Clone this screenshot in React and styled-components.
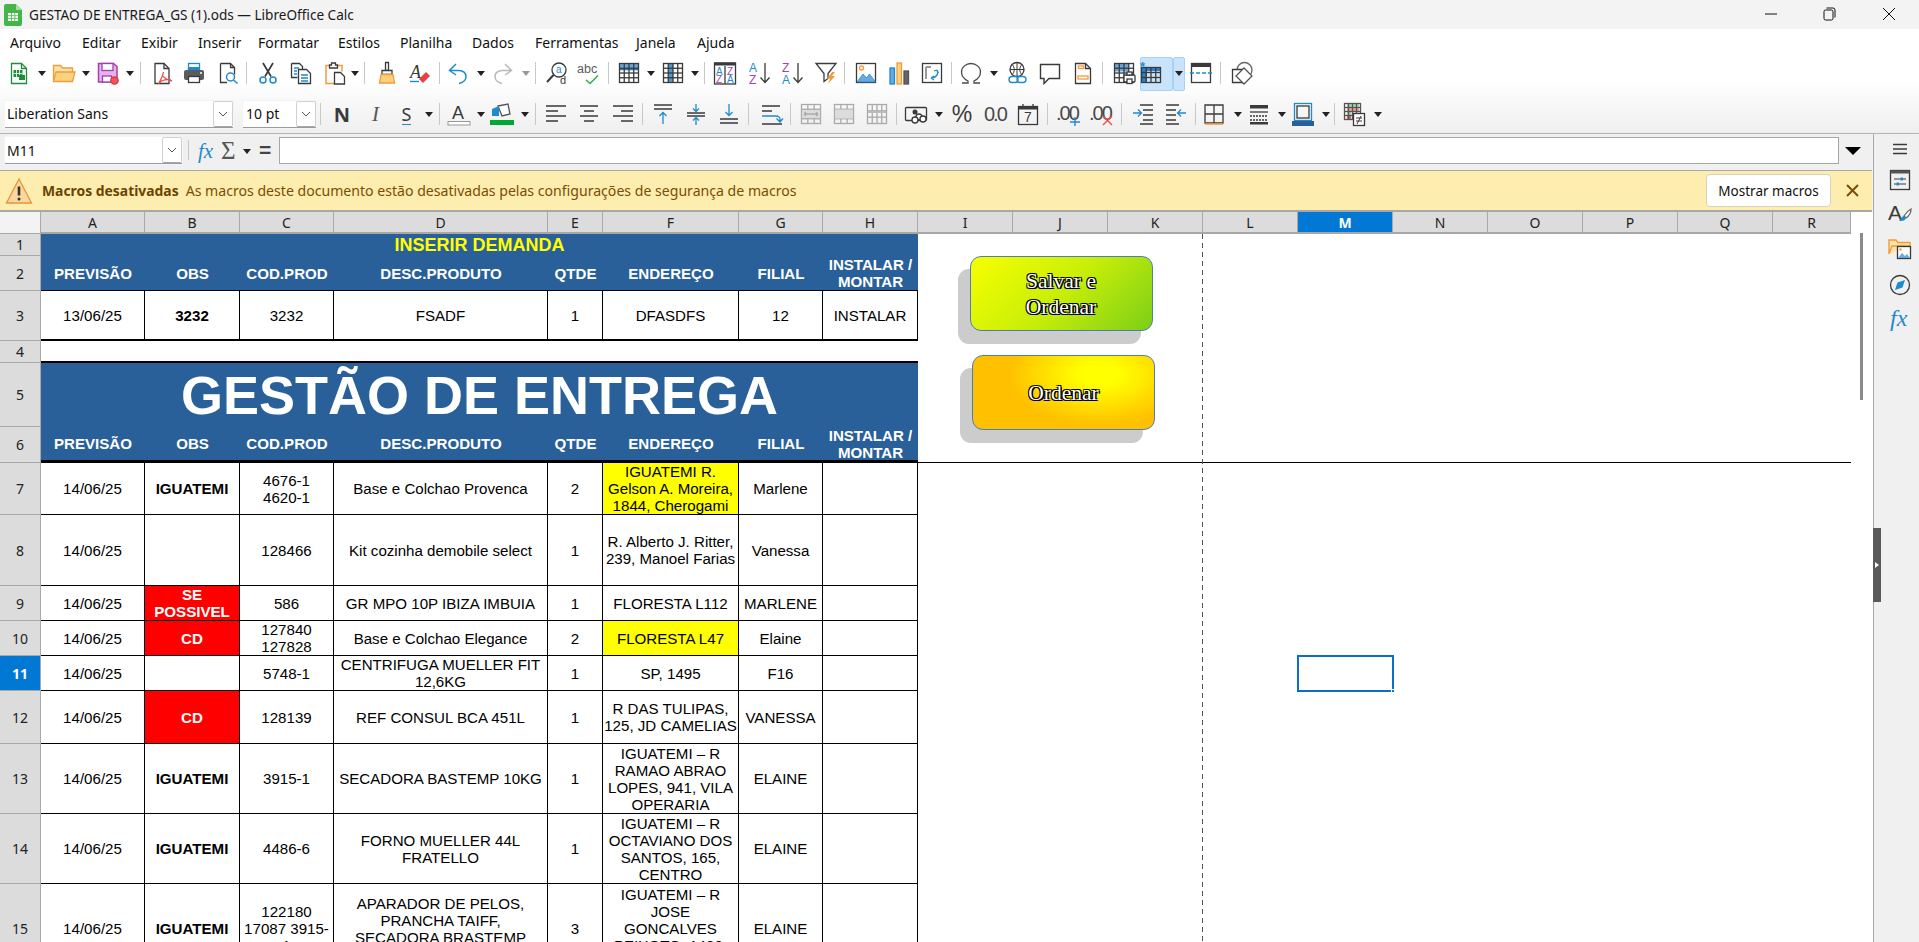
import React from 'react';
import styled, { createGlobalStyle } from 'styled-components';

const UI = `"Noto Sans", "Open Sans", sans-serif`;
const D = '#3a3a3a';
const B = '#1e8bcd';
const O = '#f29b3b';
const P = '#a33fb0';
const G = '#1e8e3e';

const Global = createGlobalStyle`
  html, body { margin: 0; padding: 0; background: #fff; }
  #root { width: 1919px; height: 942px; }
`;

const Window = styled.div`
  width: 1919px; height: 942px; overflow: hidden; display: flex; flex-direction: column;
  font-family: ${UI}; color: #111; background: #f0f0f0;
`;
const TitleBar = styled.div`
  height: 29px; flex: none; background: #f3f3f3; display: flex; align-items: center; position: relative;
`;
const AppLogo = styled.svg`
  width: 18px; height: 22px; margin-left: 4px; flex: none;
`;
const TitleText = styled.div`
  margin-left: 7px; font-size: 13.6px; white-space: nowrap; color: #1a1a1a;
`;
const WinControls = styled.div`
  position: absolute; right: 0; top: 0; height: 29px; width: 154px;
`;
const WinIcon = styled.svg`
  position: absolute; top: 6px; left: ${p => p.$x}px; width: 16px; height: 16px;
  fill: none; stroke: #111; stroke-width: 1;
`;
const MenuBar = styled.div`
  height: 27px; flex: none; background: #fff; display: flex; align-items: center; padding: 0 0 1px 10px;
`;
const MenuItem = styled.div`
  width: ${p => p.$w}px; flex: none; font-size: 14px; color: #111; white-space: nowrap;
`;
const Toolbars = styled.div`
  height: 76px; flex: none; border-bottom: 1px solid #b4b4b4;
  background: linear-gradient(#ffffff 0%, #ffffff 30%, #efefef 100%);
`;
const ToolRow = styled.div`
  height: 32px; display: flex; align-items: center; margin-bottom: ${p => p.$mb || 0}px;
`;
const Slot = styled.div`
  flex: none; position: relative; display: flex; align-items: center; justify-content: center;
  margin-left: ${p => p.$gap}px; width: ${p => p.$w}px; height: 32px;
`;
const Active = styled.div`
  position: absolute; left: ${p => p.$l}px; width: ${p => p.$w}px; top: 0; height: 34px; box-sizing: border-box;
  background: #c9e3fa; border: 1px solid #a5d2f7; border-radius: 2px;
`;
const Ico = styled.svg`
  width: 24px; height: 24px; flex: none; position: relative; fill: none; stroke-width: 1.3; overflow: visible;
  font-family: "Liberation Sans", sans-serif;
`;
const Caret = styled.div`
  width: 0; height: 0; position: relative; border-left: 4px solid transparent; border-right: 4px solid transparent;
  border-top: 5px solid ${p => p.$muted ? '#999' : '#222'};
`;
const Sep = styled.div`
  width: 1px; height: 22px; background: #c8c8c8;
`;
const BoldN = styled.span`
  font: 700 20px "Noto Sans", sans-serif; color: ${D};
`;
const ItalicI = styled.span`
  font: italic 400 21px "Liberation Serif", serif; color: #555;
`;
const UnderS = styled.span`
  font: 400 18px "Noto Sans", sans-serif; color: ${D}; border-bottom: 1.5px solid ${B}; line-height: 20px;
`;
const PercentText = styled.span`
  font: 400 23px "Liberation Sans", sans-serif; color: ${D};
`;
const ComboBox = styled.div`
  width: 100%; height: 27px; box-sizing: border-box; background: #fff; border-bottom: 1px solid #9a9a9a;
  display: flex; align-items: center; font-size: 14px; color: #111; padding-left: ${p => p.$pl || 2}px;
  box-shadow: 0 0 0 1px #f4f4f4;
`;
const ComboText = styled.span`
  flex: 1; white-space: nowrap; overflow: hidden;
`;
const ComboBtn = styled.div`
  width: 20px; height: 26px; flex: none; box-sizing: border-box; border: 1px solid #d0d0d0; border-bottom-color: #a8a8a8;
  border-radius: 2px; background: #fff; display: flex; align-items: center; justify-content: center;
`;
const Chevron = styled.svg`
  width: 10px; height: 6px; fill: none; stroke: #555; stroke-width: 1;
`;
const Main = styled.div`
  flex: 1; display: flex; min-height: 0;
`;
const Work = styled.div`
  width: 1873px; flex: none; display: flex; flex-direction: column; min-height: 0;
`;
const FormulaBar = styled.div`
  height: 36px; flex: none; box-sizing: border-box; padding-top: 3px; position: relative; background: #f0f0f0;
`;
const NameBox = styled.div`
  position: absolute; left: 5px; top: 3px; width: 177px;
`;
const FxLabel = styled.span`
  position: absolute; left: ${p => p.$x}px; top: ${p => p.$y}px; font: ${p => p.$font}; color: ${p => p.$c}; line-height: 26px;
`;
const ThinSep = styled.div`
  position: absolute; left: 188px; top: 6px; width: 1px; height: 20px; background: #c8c8c8;
`;
const SmallCaret = styled(Caret)`
  position: absolute; left: 243px; top: 15px;
`;
const FormulaInput = styled.div`
  position: absolute; left: 279px; top: 3px; right: 34px; height: 27px; box-sizing: border-box;
  background: #fff; border: 1px solid #a6a6a6;
`;
const BigCaret = styled.div`
  position: absolute; left: 1845px; top: 13px; width: 0; height: 0;
  border-left: 8px solid transparent; border-right: 8px solid transparent; border-top: 8px solid #000;
`;
const InfoBar = styled.div`
  height: 42px; flex: none; box-sizing: border-box; background: #fdeeb0; border-top: 1px solid #a8a8a8; border-bottom: 2px solid #a8a8a8;
  display: flex; align-items: center; position: relative; margin-right: 1px;
`;
const WarnIcon = styled.svg`
  width: 28px; height: 28px; margin-left: 5px; flex: none;
`;
const InfoTitle = styled.span`
  margin-left: 9px; font-weight: 700; font-size: 13.9px; color: #6d4300; white-space: nowrap;
`;
const InfoText = styled.span`
  margin-left: 7px; font-size: 14.1px; color: #7a4d00; white-space: nowrap;
`;
const InfoBtn = styled.div`
  position: absolute; left: 1706px; top: 3px; width: 125px; height: 33px; box-sizing: border-box; background: #fff;
  border: 1px solid #d6d2c0; border-radius: 4px; display: flex; align-items: center; justify-content: center;
  font-size: 13.5px; color: #111;
`;
const InfoClose = styled.svg`
  position: absolute; left: 1845px; top: 12px; width: 15px; height: 15px; fill: none; stroke: #7a4d0a; stroke-width: 2;
`;
const SheetArea = styled.div`
  flex: 1; display: flex; min-height: 0; background: #fff;
`;
const SheetGrid = styled.div`
  width: 1851px; height: 731px; flex: none; overflow: hidden; position: relative; display: grid;
  grid-template-columns: 41px 104px 95px 94px 214px 55px 136px 84px 95px 95px 95px 95px 95px 95px 95px 95px 95px 95px 78px;
  grid-template-rows: 22px 22px 35px 50px 22px 64px 36px 52px 71px 35px 35px 35px 53px 70px 70px 90px;
  font-family: "Liberation Sans", Arial, sans-serif; font-size: 15.1px; line-height: 17px; color: #000;
`;
const Corner = styled.div`
  grid-row: 1; grid-column: 1; background: #f3f3f3; border-right: 1px solid #a8a8a8; border-bottom: 1px solid #a8a8a8;
`;
const ColHead = styled.div`
  grid-row: 1; grid-column: ${p => p.$col}; box-sizing: border-box; display: flex; align-items: center; justify-content: center;
  font-family: ${UI}; font-size: 14px; border-right: 1px solid #a8a8a8; border-bottom: 2px solid #a8a8a8;
  background: ${p => p.$on ? '#0078d4' : '#dcdcdc'}; color: ${p => p.$on ? '#fff' : '#222'}; font-weight: ${p => p.$on ? 700 : 400};
`;
const RowHead = styled.div`
  grid-row: ${p => p.$row}; grid-column: 1; box-sizing: border-box; display: flex; align-items: center; justify-content: center;
  font-family: ${UI}; font-size: 14px; border-right: 1px solid #a8a8a8; border-bottom: 1px solid #a8a8a8;
  background: ${p => p.$on ? '#0078d4' : '#dcdcdc'}; color: ${p => p.$on ? '#fff' : '#222'}; font-weight: ${p => p.$on ? 700 : 400};
`;
const Cell = styled.div`
  grid-row: ${p => p.$row}; grid-column: ${p => p.$col} / span ${p => p.$span || 1};
  box-sizing: border-box; overflow: hidden; display: flex; align-items: center; justify-content: center; text-align: center;
  white-space: pre-line; padding: 0;
  background: ${p => p.$bg || '#fff'}; color: ${p => p.$c || '#000'}; font-weight: ${p => p.$bold ? 700 : 400};
  border-right: ${p => p.$nr ? 0 : 1}px solid #000; border-bottom: ${p => p.$bb ?? 1}px solid #000;
`;
const HeadCell = styled(Cell)`
  border-right: 0; background: #2a6099; color: #fff; font-weight: 700;
`;
const TitleCell = styled(Cell)`
  font-size: ${p => p.$size}px; line-height: 1; border-right: 0; background: #2a6099; color: ${p => p.$c}; font-weight: 700;
`;
const FreezeLine = styled.div`
  grid-row: 7; grid-column: 10 / -1; border-bottom: 1px solid #000;
`;
const PageBreak = styled.div`
  position: absolute; left: 1202px; top: 22px; bottom: 0; width: 1px;
  background: repeating-linear-gradient(#555 0 5px, transparent 5px 9px);
`;
const Selected = styled.div`
  grid-row: 12; grid-column: 14; box-sizing: border-box; margin: -1px 0 0 -1px; width: 97px; height: 37px; border: 2px solid #0d6fc4; position: relative;
  &::after { content: ''; position: absolute; right: -3px; bottom: -3px; width: 4px; height: 4px; background: #0d6fc4; border: 1px solid #fff; box-sizing: border-box; }
`;
const ShapeShadow = styled.div`
  position: absolute; left: ${p => p.$x - 12}px; top: ${p => p.$y + 13}px; width: 183px; height: 75px;
  background: #cccccc; border-radius: 11px;
`;
const ShapeButton = styled.div`
  position: absolute; left: ${p => p.$x}px; top: ${p => p.$y}px; width: 183px; height: 75px; box-sizing: border-box;
  border: 1px solid #4a7ebb; border-radius: 11px; background: ${p => p.$bg};
  display: flex; align-items: center; justify-content: center; text-align: center; white-space: pre-line;
  font-family: "Liberation Serif", serif; font-size: 21.5px; line-height: 26px; color: #fff;
  text-shadow: -1px -1px 0 #000, 1px -1px 0 #000, -1px 1px 0 #000, 1px 1px 0 #000, 1.4px 1.4px 0 #000;
`;
const ScrollTrack = styled.div`
  width: 22px; flex: none; background: #fff; position: relative;
`;
const ScrollThumb = styled.div`
  position: absolute; left: 9px; top: 21px; width: 3px; height: 167px; background: #8a8a8a;
`;
const Sidebar = styled.div`
  width: 46px; flex: none; box-sizing: border-box; border-left: 1px solid #a8a8a8; background: #f0f0f0; position: relative;
`;
const SideIco = styled(Ico)`
  position: absolute; left: ${p => p.$x ?? 14}px; top: ${p => p.$y}px;
`;
const SideHandle = styled.div`
  position: absolute; left: -1px; top: 394px; width: 8px; height: 74px; background: #5a5a5a; display: flex; align-items: center; justify-content: center;
  &::after { content: ''; width: 0; height: 0; border-top: 3px solid transparent; border-bottom: 3px solid transparent; border-left: 4px solid #fff; }
`;

const T = ({ x, y, s = 11, c = D, w = 400, f, ...r }) => (
  <text x={x} y={y} fontSize={s} fill={c} stroke="none" fontWeight={w} fontFamily={f} {...r} />
);
const tableLines = (x, y, w, h, cols, rows, c = D) => {
  const out = [<rect key="r" x={x} y={y} width={w} height={h} stroke={c} />];
  for (let i = 1; i < cols; i++) out.push(<path key={'c' + i} d={`M${x + (w * i) / cols} ${y}v${h}`} stroke={c} />);
  for (let i = 1; i < rows; i++) out.push(<path key={'w' + i} d={`M${x} ${y + (h * i) / rows}h${w}`} stroke={c} />);
  return out;
};
const line = (d, c = D, w = 1.3) => <path d={d} stroke={c} strokeWidth={w} />;

const icons = {
  newSheet: <><path d="M4.5 2.5h10l5 5v15h-15z" stroke={G} /><path d="M14.5 2.5v5h5" stroke={G} /><rect x="6.5" y="9" width="9" height="7" fill={G} /><path d="M9.5 9v7M12.5 9v7M6.5 12.5h9" stroke="#fff" strokeWidth=".8" /><rect x="12" y="14" width="6" height="5" fill={G} /></>,
  open: <><path d="M1.5 19V4.5h7l2 2.5h10v4" fill="#fde3a8" stroke={O} /><path d="M1.5 20.5l2.5-9.5h19l-2.5 9.5z" fill="#fdd27f" stroke={O} /></>,
  save: <><path d="M2.5 2.5h15l3.500 3v15.500h-18.500z" fill="#e7b4e9" stroke={P} strokeWidth="1.5" /><rect x="6" y="2.5" width="11" height="7" fill="#fff" stroke={P} /><rect x="6.500" y="15" width="9" height="6" fill="#fff" stroke={P} /><circle cx="18.500" cy="19.500" r="3.700" fill="#f2545b" stroke="#d13c44" /></>,
  pdf: <><path d="M5 2.500h9l5 5v15h-14z" stroke={D} /><path d="M14 2.500v5h5" stroke={D} /><path d="M13.500 11c-.5 4-3 8-5 12M13 15c1.500 3 5 4 9 5M9 22c3-3 7-4 12-3" stroke="#e84c4c" /></>,
  print: <><rect x="6.500" y="2.500" width="11" height="7" fill="#fff" stroke={B} /><rect x="7" y="6" width="10" height="3" fill={B} /><rect x="2" y="9" width="20" height="10" rx="2" fill="#5b5b5b" /><rect x="6.500" y="15.500" width="11" height="6" fill="#fff" stroke={D} /><circle cx="19" cy="12" r="1" fill="#fff" /></>,
  preview: <><path d="M4.500 2.500h10l4 4v7M14.500 2.500v4h4M11 21.500h-6.500v-19" stroke={D} /><circle cx="14.500" cy="16" r="4" stroke={B} strokeWidth="1.5" /><path d="M17.500 19l4 3.500" stroke={B} strokeWidth="1.5" /></>,
  cut: <><path d="M7 2l8 13.500M17 2L9 15.500" stroke={D} strokeWidth="1.700" /><circle cx="7" cy="19" r="3" stroke={B} strokeWidth="1.500" /><circle cx="17" cy="19" r="3" stroke={B} strokeWidth="1.500" /></>,
  copy: <><path d="M2.500 2.500h8l3 3v3M2.500 2.500v14h6" stroke={D} /><path d="M9.500 8.500h8l4 4v10h-12z" fill="#fff" stroke={D} /><path d="M5 7h5M5 10h3M5 13h3M12 14h7M12 17h7M12 20h7" stroke={B} /></>,
  paste: <><path d="M7 4.500h-4v18h8M14 4.500h5v6" stroke={O} strokeWidth="1.500" /><path d="M8.500 4V2h4v2h2v3h-8V4z" stroke={D} /><path d="M11.500 11.500h6l4 4v7.500h-10z" fill="#fff" stroke={D} /></>,
  brush: <><path d="M10.500 1.500h3v8h-3z" stroke={D} /><path d="M7 9.500h10v4h-10z" fill="#fff" stroke={D} /><path d="M6 13.500h12l1.500 8.500h-15z" fill="#fcd07a" stroke={O} /></>,
  clear: <><T x="3" y="17" s={18} f="Liberation Serif" c={D} fontStyle="italic">A</T><path d="M3 20.500h9" stroke={B} strokeWidth="1.400" /><path d="M12 18l7-7 4 4-7 7z" fill="#e84141" /></>,
  undo: <><path d="M10 3L3.500 9.500 10 14" stroke={B} strokeWidth="1.500" /><path d="M4 9.500h9c4 0 7 2.500 7 6 0 3.500-3 6-7 7" stroke={B} strokeWidth="1.500" /></>,
  redo: <><path d="M14 3l6.500 6.500L14 14" stroke="#b9b9b9" strokeWidth="1.500" /><path d="M20 9.500h-9c-4 0-7 2.500-7 6 0 3.500 3 6 7 7" stroke="#b9b9b9" strokeWidth="1.500" /></>,
  find: <><circle cx="14" cy="9" r="7" stroke={D} /><path d="M8.500 14L2 21" stroke={D} strokeWidth="2" /><T x="11" y="12" s={10} c={B}>a</T><T x="15" y="23" s={11} c={D}>d</T></>,
  spell: <><T x="0" y="12" s={12.500} c="#5c5c5c">abc</T><path d="M9 19l4 3.500 8-8" stroke="#35b050" strokeWidth="1.600" /></>,
  table: <><rect x="2.500" y="2.500" width="19" height="4.750" fill="#6aa9de" /><rect x="2.500" y="7.250" width="19" height="2" fill="#2f7fc7" />{tableLines(2.5, 2.5, 19, 19, 4, 4)}</>,
  cols: <><rect x="7.250" y="2.500" width="4.750" height="19" fill="#4a9bd6" />{tableLines(2.5, 2.5, 19, 19, 4, 4)}</>,
  sort: <><rect x="1.500" y="2" width="21" height="21" stroke={D} /><rect x="1.500" y="1.500" width="21" height="3" fill={D} /><path d="M12 5v18" stroke={D} /><T x="3" y="14" s={10} c={B}>A</T><T x="3" y="22" s={10} c={P}>Z</T><T x="14" y="14" s={10} c={P}>Z</T><T x="14" y="22" s={10} c={B}>A</T></>,
  az: <><T x="1" y="11" s={12} c={B}>A</T><T x="1" y="23" s={12} c={P}>Z</T><path d="M17 2v19M12.500 16.500l4.500 5 4.500-5" stroke={D} /></>,
  za: <><T x="1" y="11" s={12} c={P}>Z</T><T x="1" y="23" s={12} c={B}>A</T><path d="M17 2v19M12.500 16.500l4.500 5 4.500-5" stroke={D} /></>,
  filter: <><path d="M2 2.500h20l-8 10v5l-4 3v-8z" stroke={D} /><path d="M18 11l-5 7h3l-2 5 7-8h-3l3-4z" fill={O} /></>,
  image: <><rect x="2.500" y="2.500" width="19" height="19" stroke={D} /><circle cx="7.500" cy="7" r="2" stroke={O} /><path d="M3 21l6-8 3.500 4 3-4 6 8z" fill="#6aa9de" stroke={B} strokeWidth=".8" /></>,
  chart: <><rect x="3" y="7" width="4.500" height="16" fill="#6aa9de" stroke={B} /><rect x="10" y="2" width="4.500" height="21" fill="#fdd27f" stroke={O} /><rect x="17" y="10" width="4.500" height="13" fill="#666" stroke="#555" /></>,
  pivot: <><rect x="2.500" y="2.500" width="19" height="19" stroke={D} /><path d="M6 6h5M6 6v12" stroke="#999" strokeWidth="2" /><path d="M17 9c2 4-1 8-6 8M17 9l-3 1M17 9l1.500 3M11 17l3-2M11 17l3 2" stroke={B} /></>,
  omega: <path d="M3 22h6v-2C5 18 2.500 15 2.500 11 2.500 6 7 2.500 12 2.500S21.500 6 21.500 11c0 4-2.500 7-6.500 9v2h6" stroke="#4a4a4a" />,
  link: <><circle cx="11" cy="8.500" r="7" stroke={D} /><path d="M4 8.500h14M11 1.500v14M6 3.500c3 3 3 7 0 10.500M16 3.500c-3 3-3 7 0 10.500" stroke={D} strokeWidth="1" /><rect x="3" y="15.500" width="9" height="6" rx="3" fill="#fff" stroke={B} strokeWidth="1.400" /><rect x="11" y="15.500" width="9" height="6" rx="3" stroke={B} strokeWidth="1.400" /></>,
  comment: <path d="M2.500 3.500h19v14H11l-5 5v-5H2.500z" stroke={D} strokeWidth="1.400" />,
  note: <><path d="M4.500 2.500h10l5 5v15h-15z" stroke={D} /><path d="M14.500 2.500v5h5" stroke={D} /><rect x="7.500" y="5" width="5" height="2.500" fill="#fff" stroke={O} /><rect x="7" y="15" width="10" height="3" fill="#fff" stroke={O} /></>,
  printRange: <><rect x="2.500" y="2.500" width="14" height="8" fill="#6aa9de" />{tableLines(2.5, 2.5, 19, 19, 4, 4)}<rect x="12" y="14" width="11" height="7" rx="1" fill="#fff" stroke={D} /><rect x="15" y="11" width="5" height="3" fill="#fff" stroke={D} /><rect x="15" y="18" width="5" height="4.500" fill="#fff" stroke={D} /></>,
  freeze: <><rect x="2.500" y="6" width="19" height="4" fill="#2f7fc7" /><rect x="2.500" y="6" width="5" height="16" fill="#2f7fc7" />{tableLines(2.5, 6.5, 19, 15, 4, 3)}<T x="1" y="10" s={13} c={B} w={700}>*</T></>,
  header: <><rect x="2.500" y="2.500" width="19" height="19" stroke={D} /><rect x="2.500" y="2.500" width="19" height="3.500" fill={D} /><path d="M1 12h22" stroke={B} strokeDasharray="4 2" /></>,
  shapes: <><circle cx="14.500" cy="9" r="7.500" stroke="#666" /><path d="M2.500 8.500h11v13h-11z" fill="#fff" stroke={D} /><path d="M14 7l8 8-8 8-8-8z" fill="#fff" stroke="#555" /></>,

  fontColor: <><T x="5" y="17" s={18} c={D}>A</T><rect x="1" y="19.500" width="22" height="3.500" fill="#fff" stroke="#999" strokeWidth="1" /></>,
  highlight: <><path d="M8 4l10-2 2 10-8 2z" fill="#fff" stroke="#555" /><path d="M2 7l7-3v10H2z" fill={B} /><rect x="0" y="18" width="24" height="5" fill="#00a933" /></>,
  left: line('M2 4h20M2 9h12M2 14h20M2 19h12'),
  center: line('M3 4h18M7 9h10M3 14h18M7 19h10'),
  right: line('M2 4h20M10 9h12M2 14h20M10 19h12'),
  top: <>{line('M3 3h18M3 7h18')}{line('M12 22V11M8.500 14l3.500-3.500 3.500 3.500', B)}</>,
  mid: <>{line('M3 11h18M3 14h18')}{line('M12 2v7M9 6.500l3 3 3-3M12 23v-7M9 18.500l3-3 3 3', B)}</>,
  bottom: <>{line('M3 17h18M3 21h18')}{line('M12 2v11M8.500 10l3.500 3.500 3.500-3.500', B)}</>,
  wrap: <>{line('M3 4h18M3 9h10M3 22h20')}{line('M3 14h14c3 0 4 2 4 3v2M17.500 16.500l3.500 3.500 3-3.500', B)}</>,
  merge: <>{tableLines(2.5, 2.5, 19, 19, 3, 4, '#aaa')}<rect x="3" y="8" width="18" height="8" fill="#dcdcdc" /><path d="M5 12h14M5 12l2-2M5 12l2 2M19 12l-2-2M19 12l-2 2" stroke="#aaa" /></>,
  merge2: <>{tableLines(2.5, 2.5, 19, 19, 3, 4, '#aaa')}<rect x="3" y="7.500" width="18" height="9" fill="#dcdcdc" /></>,
  merge3: <>{tableLines(2.5, 2.5, 19, 19, 4, 3, '#aaa')}<rect x="3" y="9" width="18" height="2" fill="#bbb" /></>,
  currency: <><rect x="1.500" y="5.500" width="21" height="13" rx="1" stroke={D} /><circle cx="11" cy="10" r="2.500" fill={D} /><circle cx="15" cy="15" r="3" fill="#fff" stroke={D} /><circle cx="19" cy="17" r="3" fill="#fff" stroke={D} /><circle cx="11" cy="18" r="3" fill="#fff" stroke={D} /></>,
  number: <T x="1" y="19" s={20} c="#4a4a4a" letterSpacing="-2">0.0</T>,
  date: <><rect x="2.500" y="4.500" width="19" height="18" stroke={D} /><rect x="2.500" y="4.500" width="19" height="3" fill={D} /><path d="M7 2v3M17 2v3" stroke={D} /><T x="8" y="20" s={14} c={D}>7</T></>,
  addDec: <><T x="-1" y="18" s={20} c="#4a4a4a" letterSpacing="-2">.00</T><path d="M13 20h10M18 15v9" stroke={B} strokeWidth="1.400" /></>,
  delDec: <><T x="-1" y="18" s={20} c="#4a4a4a" letterSpacing="-2">.00</T><path d="M13 14l9 9M22 14l-9 9" stroke="#e84c4c" strokeWidth="1.400" /></>,
  indent: <>{line('M9 3h13M12 8h10M12 13h10M12 18h10M9 22h13')}{line('M2 11h8M7 7.500l3.500 3.500L7 14.500', B)}</>,
  outdent: <>{line('M2 3h13M2 8h10M2 13h10M2 18h10M2 22h13')}{line('M22 11h-8M17 7.500L13.500 11l3.500 3.500', B)}</>,
  borders: <><path d="M3 3h18v18H3zM12 3v18M3 12h18" stroke={D} /><path d="M3 22h18" stroke={O} strokeWidth="1.500" /></>,
  bstyle: <><rect x="3" y="3" width="18" height="3.500" fill={D} /><path d="M3 10h18" stroke={D} /><path d="M3 14h18M3 18h18" stroke={D} strokeDasharray="2 1" /><rect x="3" y="20" width="18" height="2.500" fill={D} /></>,
  bcolor: <><rect x="3.500" y="1.500" width="17" height="17" stroke={B} /><rect x="6" y="4" width="12" height="12" stroke={D} /><rect x="1" y="19" width="22" height="5" fill="#2a6099" /></>,
  cond: <><rect x="4" y="2" width="12" height="4" fill="#a3dca6" /><rect x="4" y="6" width="12" height="4" fill="#f8a0a0" /><rect x="4" y="10" width="4" height="4" fill="#a3dca6" /><rect x="4" y="14" width="4" height="4" fill="#f06060" />{tableLines(1.5, 1.5, 16, 16, 4, 4, '#555')}<rect x="10.500" y="11.500" width="11" height="12" fill="#fff" stroke={D} /><path d="M13 16h6M13 19h6M18 14l-4 8" stroke={D} strokeWidth="1" /></>,

  props: <><rect x="2.500" y="2.500" width="19" height="19" stroke={D} /><rect x="2.500" y="2.500" width="19" height="3" fill="#555" /><path d="M6 11h12M6 16h12" stroke={D} strokeWidth="1" /><rect x="12.500" y="9.500" width="2.500" height="3" fill={B} /><rect x="8.500" y="14.500" width="2.500" height="3" fill={B} /></>,
  styles: <><T x="0" y="17" s={21} c={D}>A</T><path d="M23 6c-2 1-5 4-7 7l2 2c3-2 5-6 5-9z" fill="#fff" stroke="#666" /><path d="M16 13c-2 0-3 3-5 5 3 0 6 0 7-3z" fill={B} /></>,
  gallery: <><path d="M1 17V3h7l2 2.500h12V9M1 17l3-8h18" stroke={O} strokeWidth="1.400" fill="#fde3a8" /><rect x="9.500" y="9.500" width="13" height="12" fill="#fff" stroke={D} /><circle cx="12.500" cy="12.500" r="1.200" fill={O} /><path d="M10 21l4-5 3 3 2-2 3 4z" fill="#6aa9de" /></>,
  nav: <><circle cx="12" cy="12" r="9.500" stroke={D} /><path d="M17 7l-2.500 7.500L7 17l2.500-7.500z" fill={B} /></>,
};

const row1 = [
  [19, 'newSheet'], [42, 'c'], [63.5, 'open'], [86, 'c'], [107.5, 'save'], [130, 'c'], [140, 's'], [162, 'pdf'], [194, 'print'], [228, 'preview'], [246.5, 's'],
  [268, 'cut'], [301, 'copy'], [334.5, 'paste'], [355, 'c'], [364.5, 's'], [386.5, 'brush'], [419, 'clear'], [439, 's'], [458, 'undo'], [481, 'c'], [502.5, 'redo'], [526, 'cm'], [535, 's'],
  [557, 'find'], [589, 'spell'], [608, 's'], [628.5, 'table'], [651, 'c'], [672.5, 'cols'], [695, 'c'], [704.5, 's'], [725, 'sort'], [760, 'az'], [793, 'za'], [825.5, 'filter'], [844, 's'],
  [866, 'image'], [898.5, 'chart'], [932, 'pivot'], [951, 's'], [971, 'omega'], [994, 'c'], [1017.5, 'link'], [1050, 'comment'], [1083, 'note'], [1102, 's'], [1124, 'printRange'],
  [1151, 'freeze'], [1178.5, 'c'], [1201, 'header'], [1220, 's'], [1242, 'shapes'],
];
const row2 = [
  [119, 'fontBox', 228], [279.5, 'sizeBox', 73], [320, 's'], [342, 'N'], [375.5, 'I'], [406.5, 'S'], [429, 'c'], [439, 's'], [458.5, 'fontColor'], [481, 'c'], [502, 'highlight'], [525, 'c'], [535, 's'],
  [556, 'left'], [589, 'center'], [622.5, 'right'], [642, 's'], [663, 'top'], [696, 'mid'], [729, 'bottom'], [748.5, 's'], [770.5, 'wrap'], [790, 's'], [811, 'merge'], [844, 'merge2'], [877, 'merge3'], [896, 's'],
  [916, 'currency'], [939, 'c'], [962, '%'], [995, 'number'], [1028, 'date'], [1047, 's'], [1068.5, 'addDec'], [1102, 'delDec'], [1121.6, 's'], [1143, 'indent'], [1176, 'outdent'], [1196, 's'],
  [1214.5, 'borders'], [1238, 'c'], [1259, 'bstyle'], [1282, 'c'], [1303, 'bcolor'], [1326, 'c'], [1335, 's'], [1355, 'cond'], [1378, 'c'],
];

const Combo = ({ text, pl }) => (
  <ComboBox $pl={pl}>
    <ComboText>{text}</ComboText>
    <ComboBtn><Chevron viewBox="0 0 10 6"><path d="M1 1l4 4 4-4" /></Chevron></ComboBtn>
  </ComboBox>
);

const renderTool = key => {
  switch (key) {
    case 'c': return <Caret />;
    case 'cm': return <Caret $muted />;
    case 's': return <Sep />;
    case 'N': return <BoldN>N</BoldN>;
    case 'I': return <ItalicI>I</ItalicI>;
    case 'S': return <UnderS>S</UnderS>;
    case '%': return <PercentText>%</PercentText>;
    case 'fontBox': return <Combo text="Liberation Sans" />;
    case 'sizeBox': return <Combo text="10 pt" pl={3} />;
    default: return <Ico viewBox="0 0 24 24">{icons[key]}</Ico>;
  }
};
const slotWidth = (key, w) => w || (key === 'c' || key === 'cm' ? 8 : key === 's' ? 1 : 24);

const Tools = ({ items, mb }) => {
  let right = 0;
  return (
    <ToolRow $mb={mb}>
      {items.map(([cx, key, ww]) => {
        const w = slotWidth(key, ww);
        const gap = cx - w / 2 - right;
        right = cx + w / 2;
        return (
          <Slot key={key + cx} $gap={gap} $w={w}>
            {key === 'freeze' && <Active $l={1} $w={33} />}
            {key === 'c' && cx === 1178.5 && <Active $l={-2} $w={12} />}
            {renderTool(key)}
          </Slot>
        );
      })}
    </ToolRow>
  );
};

const menu = [['Arquivo', 72], ['Editar', 59], ['Exibir', 57], ['Inserir', 60], ['Formatar', 80], ['Estilos', 62], ['Planilha', 72], ['Dados', 63], ['Ferramentas', 101], ['Janela', 61], ['Ajuda', 60]];
const columns = 'ABCDEFGHIJKLMNOPQR'.split('');
const headers = ['PREVISÃO', 'OBS', 'COD.PROD', 'DESC.PRODUTO', 'QTDE', 'ENDEREÇO', 'FILIAL', 'INSTALAR /\nMONTAR'];
const Y = '#ffff00';
const R = '#ff0000';
const body = [
  [7, ['14/06/25', 'IGUATEMI', '4676-1\n4620-1', 'Base e Colchao Provenca', '2', 'IGUATEMI R.\nGelson A. Moreira,\n1844, Cherogami', 'Marlene', ''], { f: Y }],
  [8, ['14/06/25', '', '128466', 'Kit cozinha demobile select', '1', 'R. Alberto J. Ritter,\n239, Manoel Farias', 'Vanessa', '']],
  [9, ['14/06/25', 'SE\nPOSSIVEL', '586', 'GR MPO 10P IBIZA IMBUIA', '1', 'FLORESTA L112', 'MARLENE', ''], { b: R }],
  [10, ['14/06/25', 'CD', '127840\n127828', 'Base e Colchao Elegance', '2', 'FLORESTA L47', 'Elaine', ''], { b: R, f: Y }],
  [11, ['14/06/25', '', '5748-1', 'CENTRIFUGA MUELLER FIT\n12,6KG', '1', 'SP, 1495', 'F16', '']],
  [12, ['14/06/25', 'CD', '128139', 'REF CONSUL BCA 451L', '1', 'R DAS TULIPAS,\n125, JD CAMELIAS', 'VANESSA', ''], { b: R }],
  [13, ['14/06/25', 'IGUATEMI', '3915-1', 'SECADORA BASTEMP 10KG', '1', 'IGUATEMI – R\nRAMAO ABRAO\nLOPES, 941, VILA\nOPERARIA', 'ELAINE', '']],
  [14, ['14/06/25', 'IGUATEMI', '4486-6', 'FORNO MUELLER 44L\nFRATELLO', '1', 'IGUATEMI – R\nOCTAVIANO DOS\nSANTOS, 165,\nCENTRO', 'ELAINE', '']],
  [15, ['14/06/25', 'IGUATEMI', '122180\n17087 3915-\n1', 'APARADOR DE PELOS,\nPRANCHA TAIFF,\nSECADORA BRASTEMP\n10KG', '3', 'IGUATEMI – R\nJOSE\nGONCALVES\nPEIXOTO, 1480,\nCENTRO', 'ELAINE', '']],
];
const rowHeads = Array.from({ length: 15 }, (_, i) => i + 1);

export default function App() {
  return (
    <Window>
      <Global />
      <TitleBar>
        <AppLogo viewBox="0 0 18 22">
          <path d="M2 0h10l6 6v14a2 2 0 0 1-2 2H2a2 2 0 0 1-2-2V2a2 2 0 0 1 2-2z" fill="#43b649" />
          <path d="M12 0l6 6h-6z" fill="#a5dfa5" />
          <rect x="4" y="9" width="10" height="8" fill="#fff" />
          <path d="M7.500 9v8M10.800 9v8M4 11.700h10M4 14.400h10" stroke="#43b649" strokeWidth=".8" />
        </AppLogo>
        <TitleText>GESTAO DE ENTREGA_GS (1).ods — LibreOffice Calc</TitleText>
        <WinControls>
          <WinIcon $x={-2} viewBox="0 0 16 16"><path d="M2 8h12" /></WinIcon>
          <WinIcon $x={56} viewBox="0 0 16 16"><rect x="3" y="4" width="9" height="10" rx="1.500" /><path d="M5.500 2H12a2 2 0 0 1 2 2v7.500" /></WinIcon>
          <WinIcon $x={116} viewBox="0 0 16 16"><path d="M2 2l12 12M14 2L2 14" /></WinIcon>
        </WinControls>
      </TitleBar>
      <MenuBar>
        {menu.map(([m, w]) => <MenuItem key={m} $w={w}>{m}</MenuItem>)}
      </MenuBar>
      <Toolbars>
        <Tools items={row1} mb={9} />
        <Tools items={row2} />
      </Toolbars>
      <Main>
        <Work>
          <FormulaBar>
            <NameBox><Combo text="M11" /></NameBox>
            <ThinSep />
            <FxLabel $x={198} $y={4} $font={'italic 400 21px "Liberation Serif", serif'} $c={B}>fx</FxLabel>
            <FxLabel $x={221} $y={4} $font={'400 25px "Liberation Serif", serif'} $c="#555">Σ</FxLabel>
            <SmallCaret />
            <FxLabel $x={259} $y={3} $font={'700 21px "Liberation Sans", sans-serif'} $c="#444">=</FxLabel>
            <FormulaInput />
            <BigCaret />
          </FormulaBar>
          <InfoBar>
            <WarnIcon viewBox="0 0 28 28">
              <path d="M14 2L26.500 26H1.500z" fill="#fbd7a0" stroke="#e8933a" strokeWidth="1.300" />
              <path d="M14 9.500v9" stroke="#333" strokeWidth="2.600" />
              <circle cx="14" cy="22" r="1.500" fill="#333" />
            </WarnIcon>
            <InfoTitle>Macros desativadas</InfoTitle>
            <InfoText>As macros deste documento estão desativadas pelas configurações de segurança de macros</InfoText>
            <InfoBtn>Mostrar macros</InfoBtn>
            <InfoClose viewBox="0 0 15 15"><path d="M2 2l11 11M13 2L2 13" /></InfoClose>
          </InfoBar>
          <SheetArea>
            <SheetGrid>
              <Corner />
              {columns.map((c, i) => <ColHead key={c} $col={i + 2} $on={c === 'M'}>{c}</ColHead>)}
              {rowHeads.map(n => <RowHead key={n} $row={n + 1} $on={n === 11}>{n}</RowHead>)}

              <TitleCell $row={2} $col={2} $span={8} $size={18} $c={Y} $bb={0}>INSERIR DEMANDA</TitleCell>
              {headers.map((h, i) => <HeadCell key={'h2' + i} $row={3} $col={i + 2} $bb={1}>{h}</HeadCell>)}
              {['13/06/25', '3232', '3232', 'FSADF', '1', 'DFASDFS', '12', 'INSTALAR'].map((v, i) => (
                <Cell key={'r3' + i} $row={4} $col={i + 2} $bb={2} $bold={i === 1}>{v}</Cell>
              ))}
              <Cell $row={5} $col={2} $span={8} $nr $bb={2} />
              <TitleCell $row={6} $col={2} $span={8} $size={54} $c="#fff" $bb={0}>GESTÃO DE ENTREGA</TitleCell>
              {headers.map((h, i) => <HeadCell key={'h6' + i} $row={7} $col={i + 2} $bb={3}>{h}</HeadCell>)}
              <FreezeLine />

              {body.map(([n, vals, fill = {}]) => vals.map((v, i) => {
                const isObs = i === 1;
                const bg = isObs && fill.b ? fill.b : i === 5 && fill.f ? fill.f : undefined;
                return (
                  <Cell key={n + '-' + i} $row={n + 1} $col={i + 2} $bold={isObs} $bg={bg} $c={isObs && fill.b ? '#fff' : undefined}>{v}</Cell>
                );
              }))}
              <Selected />

              <PageBreak />
              <ShapeShadow $x={969.5} $y={44} />
              <ShapeButton $x={969.5} $y={44} $bg="linear-gradient(135deg, #f8ff00 0%, #c8ee08 50%, #7ccf18 100%)">{'Salvar e\nOrdenar'}</ShapeButton>
              <ShapeShadow $x={972} $y={143} />
              <ShapeButton $x={972} $y={143} $bg="radial-gradient(ellipse 50% 70% at 70% 25%, #ffff00 22%, #ffc000 100%)">Ordenar</ShapeButton>
            </SheetGrid>
            <ScrollTrack><ScrollThumb /></ScrollTrack>
          </SheetArea>
        </Work>
        <Sidebar>
          <SideHandle />
          <SideIco $y={3} viewBox="0 0 24 24"><path d="M5 7.500h14M5 12h14M5 16.500h14" stroke={D} /></SideIco>
          <SideIco $y={34} viewBox="0 0 24 24">{icons.props}</SideIco>
          <SideIco $y={69} viewBox="0 0 24 24">{icons.styles}</SideIco>
          <SideIco $y={103} viewBox="0 0 24 24">{icons.gallery}</SideIco>
          <SideIco $y={139} viewBox="0 0 24 24">{icons.nav}</SideIco>
          <FxLabel $x={16} $y={171} $font={'italic 400 24px "Liberation Serif", serif'} $c={B}>fx</FxLabel>
        </Sidebar>
      </Main>
    </Window>
  );
}
